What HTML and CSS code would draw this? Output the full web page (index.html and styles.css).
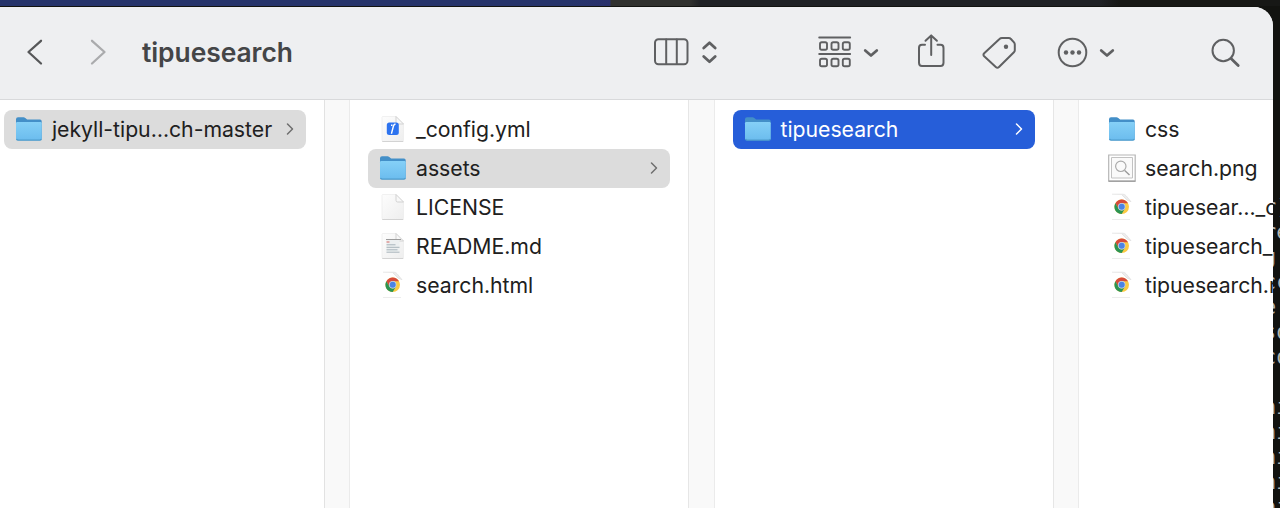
FILE: index.html
```
<!DOCTYPE html>
<html lang="en">
<head>
<meta charset="utf-8">
<title>tipuesearch</title>
<link rel="stylesheet" href="styles.css">
</head>
<body>
<svg class="defs" aria-hidden="true">
  <defs>
    <linearGradient id="folderFront" x1="0" y1="0" x2="0" y2="1"><stop offset="0" stop-color="#85d0f7"/><stop offset="1" stop-color="#6bbcee"/></linearGradient>
    <linearGradient id="paper" x1="0" y1="0" x2="1" y2="1"><stop offset="0" stop-color="#fdfdfd"/><stop offset="1" stop-color="#eeeeee"/></linearGradient>
    <symbol id="folder" viewBox="0 0 28 28">
      <path d="M1 24V4.200q0-2 2-2h5.500q1 0 1.800.7l1.200 1.100q.6.500 1.500.5H25q1.700 0 1.700 1.800V24z" fill="#438fc8"/>
      <path d="M1 8.200q0-1.200 1.200-1.200H25.500q1.200 0 1.200 1.200v15q0 2-2 2H3q-2 0-2-2z" fill="url(#folderFront)"/>
      <path d="M1.500 24q.5 1.200 1.700 1.200h21.500q1.200 0 1.700-1.200" fill="none" stroke="#4c9bcc" stroke-width="1.300"/>
    </symbol>
    <symbol id="page" viewBox="0 0 28 28">
      <path d="M3.500 1.500h13.500l7.500 7.500v16q0 1.500-1.500 1.500H4.500Q3 26.500 3 25V2z" fill="url(#paper)" stroke="#ebebeb" stroke-width=".7"/>
      <path d="M3.300 26.500h21" stroke="#cfcfcf" stroke-width=".9"/>
      <path d="M17 1.500v5.800q0 1.700 1.700 1.700h5.800z" fill="#f8f8f8" stroke="#cecece" stroke-width=".9"/>
    </symbol>
    <symbol id="config" viewBox="0 0 28 28">
      <use href="#page"/>
      <rect x="7.800" y="7.500" width="12" height="12.500" rx="2.500" fill="#2d73ef"/>
      <path d="M12 10.200l1.500.1M16.500 9q-1.600.3-2.100 2.200l-2 7.500" fill="none" stroke="#fff" stroke-width="1.400"/>
    </symbol>
    <symbol id="markdown" viewBox="0 0 28 28">
      <use href="#page"/>
      <path d="M7.500 7.500h13v12h-13z" fill="#eceff0"/>
      <path d="M7 7.500h15" stroke="#9c9c9c" stroke-width="1.200"/>
      <path d="M7.500 10h3" stroke="#d56b67" stroke-width="1.200"/>
      <path d="M7.500 12.800h9M7.500 15.300h13M7.500 17.800h11M7.500 20.200h13" stroke="#a9b4bb" stroke-width="1"/>
    </symbol>
    <symbol id="chrome" viewBox="0 0 28 28">
      <path d="M4 26.500h18" stroke="#ececec"/>
      <path d="M4 1.200h11q2 0 3 1.500l5 6-4-1.700-5-5" fill="#ededed" stroke="#dedede" stroke-width=".7"/>
      <g transform="translate(13.700 13.800)">
        <circle r="7.300" fill="#fbca43"/>
        <path d="M-6.320-3.650A7.300 7.300 0 0 1 6.320-3.650H0A3.650 3.650 0 0 0-3.160 1.830z" fill="#d64b3b"/>
        <path d="M-6.320-3.650A7.300 7.300 0 0 0 0 7.300L3.160 1.830A3.650 3.650 0 0 1-3.160 1.830z" fill="#2b9453"/>
        <circle r="3.700" fill="#c3d2ef"/><circle r="3" fill="#4b83e4"/>
      </g>
    </symbol>
    <symbol id="image" viewBox="0 0 28 28">
      <path d="M.700 1h26.500v26H.7z" fill="#fff" stroke="#b5b5b5" stroke-width="1.200"/>
      <path d="M3.500 3.500h21v20.500h-21z" fill="#fafafa" stroke="#c2c2c2"/>
      <path d="M.5 27.200h27" stroke="#888" stroke-width="1"/>
      <circle cx="12.800" cy="12.300" r="5.200" fill="none" stroke="#ababab" stroke-width="1.200"/>
      <path d="M16.700 16.500l4.800 4.500" stroke="#999" stroke-width="1.400"/>
    </symbol>
    <symbol id="disclose" viewBox="0 0 10 14"><path d="M2.500 2l5 5-5 5" fill="none" stroke="currentColor" stroke-width="1.500" stroke-linecap="round" stroke-linejoin="round"/></symbol>
    <symbol id="down" viewBox="0 0 16 10"><path d="M2.200 2.400l5.800 5.200 5.800-5.200" fill="none" stroke="currentColor" stroke-width="2.700" stroke-linecap="round" stroke-linejoin="round"/></symbol>
  </defs>
</svg>

<div class="desktop">
  <pre class="terminal">r)
re
g 
cc
e'
so
co

hi
hi
hi
hi
hi</pre>
  <main class="window">
    <header class="toolbar">
      <svg class="nav" viewBox="0 0 20 30"><path d="M16 3.800L3.500 15 16 26.500" /></svg>
      <svg class="nav forward" viewBox="0 0 20 30"><path d="M4 3.800L16.500 15 4 26.500" /></svg>
      <h1 class="title">tipuesearch</h1>
      <svg class="tool view" viewBox="0 0 68 36"><rect x="2" y="5.200" width="32.500" height="25" rx="3.500"/><path d="M13.200 5.500v24.500M23.800 5.500v24.500"/><path class="bold" d="M50.700 14l5.800-5.200 5.700 5.200M50.700 22.500l5.800 5.200 5.700-5.200"/></svg>
      <svg class="tool group" viewBox="0 0 36 36"><path d="M2.200 3.500h31M2.200 20h31"/><g><rect x="3" y="8.200" width="7" height="7.500" rx="1.800"/><rect x="14.500" y="8.200" width="7" height="7.500" rx="1.800"/><rect x="25.800" y="8.200" width="7" height="7.500" rx="1.800"/><rect x="3" y="24.800" width="7" height="7.500" rx="1.800"/><rect x="14.500" y="24.800" width="7" height="7.500" rx="1.800"/><rect x="25.800" y="24.800" width="7" height="7.500" rx="1.800"/></g></svg>
      <svg class="chevron"><use href="#down"/></svg>
      <svg class="tool share" viewBox="0 0 30 36"><path d="M9 10.800H6Q3 10.800 3 14v14.800Q3 32 6 32h18.500q3 0 3-3.200V14q0-3.200-3-3.200h-3M15.200 21V1.700M9.500 6.800l5.700-5.400 5.700 5.400"/></svg>
      <svg class="tool tag" viewBox="0 0 36 36"><path d="M21 4h6.700q1.300 0 2.200 1l3.100 3.400q.8.900.8 2.200v5.600q0 1.200-.9 2.100L18 33q-1.600 1.600-3.200 0L3.200 22.300q-1.500-1.500 0-3L18.500 5q1-1 2.500-1z"/><circle class="solid" cx="25" cy="12.800" r="2.200"/></svg>
      <svg class="tool more" viewBox="0 0 32 32"><circle cx="16.500" cy="16.500" r="13.800"/><g class="solid"><circle cx="10" cy="16.500" r="2.200"/><circle cx="16.500" cy="16.500" r="2.200"/><circle cx="23" cy="16.500" r="2.200"/></g></svg>
      <svg class="chevron"><use href="#down"/></svg>
      <svg class="tool search" viewBox="0 0 32 32"><circle cx="13.200" cy="13.500" r="10.700"/><path d="M21 21.500l7.200 7" class="bold"/></svg>
    </header>
    <div class="columns">
      <ul class="column first">
        <li class="row selected"><svg class="icon"><use href="#folder"/></svg><span class="name">jekyll-tipu…ch-master</span><svg class="arrow"><use href="#disclose"/></svg></li>
      </ul>
      <ul class="column">
        <li class="row"><svg class="icon"><use href="#config"/></svg><span class="name">_config.yml</span></li>
        <li class="row selected"><svg class="icon"><use href="#folder"/></svg><span class="name">assets</span><svg class="arrow"><use href="#disclose"/></svg></li>
        <li class="row"><svg class="icon"><use href="#page"/></svg><span class="name">LICENSE</span></li>
        <li class="row"><svg class="icon"><use href="#markdown"/></svg><span class="name">README.md</span></li>
        <li class="row"><svg class="icon"><use href="#chrome"/></svg><span class="name">search.html</span></li>
      </ul>
      <ul class="column">
        <li class="row active"><svg class="icon"><use href="#folder"/></svg><span class="name">tipuesearch</span><svg class="arrow"><use href="#disclose"/></svg></li>
      </ul>
      <ul class="column last">
        <li class="row"><svg class="icon"><use href="#folder"/></svg><span class="name">css</span></li>
        <li class="row"><svg class="icon"><use href="#image"/></svg><span class="name">search.png</span></li>
        <li class="row"><svg class="icon"><use href="#chrome"/></svg><span class="name">tipuesear…_c</span></li>
        <li class="row"><svg class="icon"><use href="#chrome"/></svg><span class="name">tipuesearch_</span></li>
        <li class="row"><svg class="icon"><use href="#chrome"/></svg><span class="name">tipuesearch.r</span></li>
      </ul>
    </div>
  </main>
</div>
</body>
</html>
```
FILE: styles.css
```
* { box-sizing: border-box; }
body { margin: 0; overflow: hidden; font-family: Inter, "Liberation Sans", sans-serif; }
.defs { position: absolute; width: 0; height: 0; }
.desktop {
  position: relative;
  width: 1280px;
  height: 508px;
  padding-top: 7px;
  overflow: hidden;
  background: linear-gradient(#0000 6px, #121310 6px), linear-gradient(90deg, #26346b 0 570px, #29306c 610px, #30312f 611px 690px, #202226 700px 1100px, #171816 1120px);
}
.terminal {
  position: absolute;
  left: 1263.500px;
  top: 195px;
  margin: 0;
  font: 21px/25px "DejaVu Sans Mono", monospace;
  color: #b5b6b2;
}
.window {
  position: relative;
  display: flex;
  flex-direction: column;
  width: 1273px;
  height: 501px;
  overflow: hidden;
  background: #fff;
  border-top-right-radius: 19px;
}
.toolbar {
  display: flex;
  align-items: center;
  flex: none;
  height: 93px;
  padding: 0 31px 2px 25px;
  background: #eeeff1;
  border-bottom: 1px solid #d8d9db;
  color: #5f6062;
}
.toolbar svg { flex: none; }
.nav { width: 20px; height: 30px; fill: none; stroke: #565759; stroke-width: 2.300; stroke-linecap: round; stroke-linejoin: round; }
.forward { margin-left: 43px; stroke: #aaabad; }
.title { width: 511px; margin: 0 0 0 34px; font-size: 26.400px; font-weight: 600; line-height: 32px; letter-spacing: -.05px; color: #444547; }
.tool { height: 36px; fill: none; stroke: #5f6062; stroke-width: 2; stroke-linecap: round; stroke-linejoin: round; }
.bold { stroke-width: 2.800; }
.solid { fill: #5f6062; stroke: none; }
.view { width: 68px; }
.group { width: 36px; margin-left: 96px; stroke-width: 1.900; }
.chevron { width: 16px; height: 10px; margin: 2px 0 0 10px; }
.share { width: 30px; margin-left: 37px; }
.tag { width: 36px; margin-left: 35px; }
.more { width: 32px; height: 32px; margin-left: 39px; }
.more + .chevron { margin-left: 11px; }
.search { width: 32px; height: 32px; margin: 1px 0 0 auto; }
.columns { display: flex; flex: 1; }
.column {
  flex: none;
  width: 364.500px;
  margin: 0;
  padding: 10px 43.500px 0 18px;
  list-style: none;
  border-right: 1px solid #ebebeb;
  background: linear-gradient(90deg, #fff 338px, #e6e6e6 338px 339.500px, #f9f9f9 339.500px);
}
.first { width: 350px; padding: 10px 43px 0 4px; background: linear-gradient(90deg, #fff 324px, #e2e2e2 324px 325px, #f9f9f9 325px); }
.last { width: 194px; padding-right: 0; border: 0; background: #fff; }
.row { display: flex; align-items: center; height: 39px; padding: 0 11px; border-radius: 8px; color: #202020; }
.icon { flex: none; width: 28px; height: 28px; margin: 0 9px 1px 0; }
.name { flex: 1; padding-bottom: 2px; font-size: 21.250px; line-height: 30px; letter-spacing: -.03px; white-space: nowrap; }
.arrow { flex: none; width: 10px; height: 14px; margin-bottom: 1px; color: #6e6e6e; }
.selected { background: #dcdcdc; }
.active { background: #265ed9; color: #fff; }
.active .arrow { color: #fff; }
```
